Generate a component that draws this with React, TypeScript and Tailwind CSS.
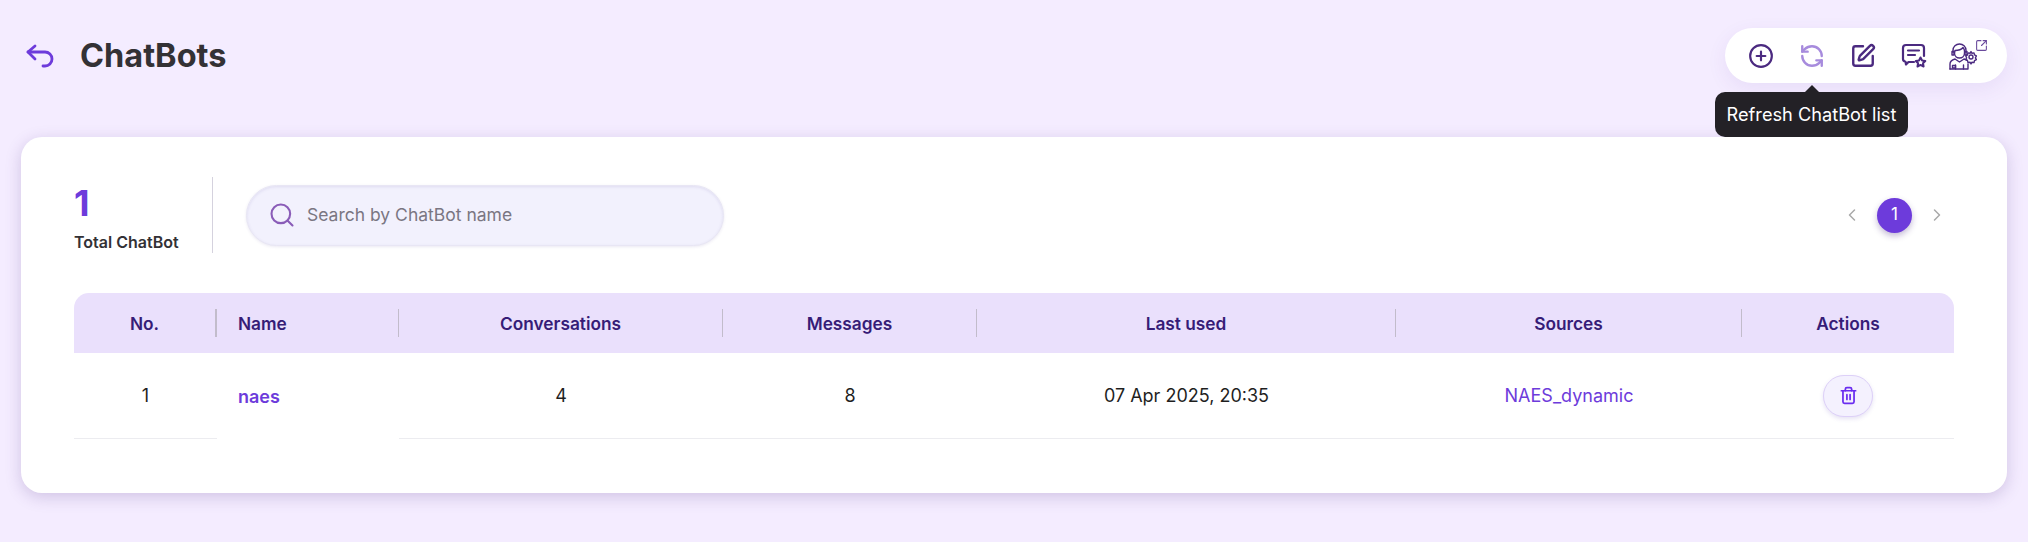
import {
  ChevronLeft,
  ChevronRight,
  CirclePlus,
  RefreshCcw,
  Search,
  SquareArrowOutUpRight,
  SquarePen,
  Trash2,
} from "lucide-react";

const columns = "grid grid-cols-[143px_182px_324px_254px_419px_346px_212px]";

function BackIcon() {
  return (
    <svg width="30" height="24" viewBox="0 0 30 24" fill="none" stroke="currentColor" strokeWidth="2.800" strokeLinecap="round" strokeLinejoin="round">
      <path d="M9 2 2 8l7 7" />
      <path d="M2 8h17a7 7 0 0 1 0 14h-2" />
    </svg>
  );
}

function ReviewIcon() {
  return (
    <svg width="26" height="26" viewBox="0 0 26 26" fill="none" stroke="currentColor" strokeWidth="2.200" strokeLinecap="round" strokeLinejoin="round">
      <path d="M13 19H7.500L5 21.500l-.5-2.700C2.800 18.400 2 17.400 2 16V5a3 3 0 0 1 3-3h15a3 3 0 0 1 3 3v8" />
      <path d="M7 7.500h11M7 12h7" />
      <path d="M19.500 14.500l1.600 3 3.200.5-2.300 2.200.6 3.300-3.100-1.600-3 1.600.6-3.300-2.300-2.200 3.200-.5z" strokeWidth="2" />
    </svg>
  );
}

function AgentIcon() {
  return (
    <svg width="28" height="27" viewBox="0 0 28 27" fill="none" stroke="currentColor" strokeWidth="1.400" strokeLinecap="round" strokeLinejoin="round">
      <path d="M4 9.500V7.500C4 3.500 7 1 10.500 1S17 3.500 17 7.500v2" />
      <path d="M6 7.500c3 0 6-.5 8-3 .8 1 1.500 2 1.500 3.500v2c0 3-2.300 5-5 5s-5-2-5-5z" />
      <path d="M3 8.500h2v3.500H3zM16 8.500h2v3.500h-2z" />
      <path d="M1 26v-5c0-2.500 2-4 5-5l4.500 3 4.500-3 3 1.200" />
      <path d="M1 26h18v-5" />
      <path d="M6.500 26v-4M14.500 26v-4" />
      <path d="M3.500 22.500h3v2.500h-3z" />
      <circle cx="22" cy="14" r="2" />
      <path d="M22 8.500l1 1.800 2-.4.500 2 1.900 1-1 1.900 1 1.800-1.900 1-.5 2-2-.4-1 1.800-1-1.800-2 .4-.5-2-1.700-1 .8-1.800-.8-1.900 1.700-1 .5-2 2 .4z" />
    </svg>
  );
}

const headers = ["No.", "Name", "Conversations", "Messages", "Last used", "Sources", "Actions"];

export default function App() {
  return (
    <div className="min-h-[542px] bg-[#f4ecff] px-[21px] pt-[28px] pb-[49px] font-['Inter',sans-serif]">
      {/* Top bar */}
      <div className="flex items-center justify-between h-[55px] mb-[54px]">
        <div className="flex items-center pl-[5px] text-[#6d3bdb]">
          <BackIcon />
          <h1 className="ml-[24px] mt-[2px] text-[32.500px] font-bold leading-none text-[#333135]">ChatBots</h1>
        </div>

        <div className="relative flex items-center h-[55px] w-[282px] pl-[23px] rounded-full bg-white shadow-[0_6px_20px_rgba(90,50,160,0.08)] text-[#4b2a80]">
          <div className="flex items-center gap-[25px]">
            <CirclePlus size={26} strokeWidth={2} />
            <RefreshCcw size={26} strokeWidth={2.200} className="text-[#a78bdd]" />
            <SquarePen size={26} strokeWidth={2.200} />
            <ReviewIcon />
            <div className="relative -ml-[3px] mt-[2px]">
              <AgentIcon />
              <SquareArrowOutUpRight size={13} strokeWidth={2} className="absolute -top-[4px] -right-[11px] text-[#6a4a9c]" />
            </div>
          </div>

          {/* Tooltip */}
          <div className="absolute top-[64px] left-[-10px] z-10 flex items-center justify-center w-[193px] h-[45px] rounded-[10px] bg-[#232126] text-[18.200px] text-white">
            Refresh ChatBot list
            <span className="absolute -top-[7px] left-[89px] h-0 w-0 border-x-[8px] border-b-[8px] border-x-transparent border-b-[#232126]" />
          </div>
        </div>
      </div>

      {/* Card */}
      <div className="rounded-[21px] bg-white px-[53px] pt-[40px] pb-[54px] shadow-[0_4px_16px_rgba(80,50,130,0.22)]">
        <div className="flex items-center justify-between h-[76px] mb-[40px]">
          <div className="flex items-center">
            <div className="flex flex-col w-[139px] h-[76px] border-r border-[#d5d2de] pt-[4px]">
              <span className="text-[36px] font-bold leading-[44px] text-[#6d3bdb]">1</span>
              <span className="mt-[7px] text-[16px] font-semibold leading-[20px] text-[#333135]">Total ChatBot</span>
            </div>
            <div className="ml-[33px] flex items-center w-[478px] h-[61px] pl-[21px] rounded-full border border-[#e8e6f4] bg-[#f2f1fd] shadow-[inset_0_1px_3px_rgba(90,70,160,0.12),0_1px_3px_rgba(90,70,160,0.12)]">
              <Search size={28} strokeWidth={1.800} className="shrink-0 text-[#8a5cb8]" />
              <input
                placeholder="Search by ChatBot name"
                className="ml-[11px] mt-[1px] flex-1 bg-transparent text-[17.500px] outline-none placeholder:text-[#7a7682]"
              />
            </div>
          </div>

          <div className="flex items-center pr-[7px]">
            <ChevronLeft size={20} strokeWidth={1.800} className="text-[#a9a9a9]" />
            <span className="mx-[15px] flex items-center justify-center w-[35px] h-[35px] rounded-full bg-[#6d3bdb] text-[17px] text-white shadow-[0_3px_6px_rgba(60,30,120,0.3)]">1</span>
            <ChevronRight size={20} strokeWidth={1.800} className="text-[#a9a9a9]" />
          </div>
        </div>

        {/* Table */}
        <div className={`${columns} h-[60px] rounded-t-[15px] bg-[#eae0fc] text-[17.300px] font-semibold text-[#361c77]`}>
          {headers.map((h, i) => (
            <div key={h} className={`flex items-center ${i === 1 ? "h-[59px] pl-[21px] bg-[#eae0fc]" : "h-full justify-center"}`}>
              <div className={`flex-1 pt-[2px] ${i === 1 ? "text-left" : "text-center"}`}>{h}</div>
              {i < 6 && <span className={`${i === 0 ? "w-[2px]" : "w-px"} h-[28px] bg-[#c2bccb]`} />}
            </div>
          ))}
        </div>
        <div className={`${columns} h-[86px] text-[18px] text-[#1f1f1f]`}>
          <div className="flex items-center justify-center border-b border-[#ececf0]">1</div>
          <div className="flex items-center pl-[21px] font-semibold text-[#6d3bdb]">naes</div>
          <div className="flex items-center justify-center border-b border-[#ececf0]">4</div>
          <div className="flex items-center justify-center border-b border-[#ececf0]">8</div>
          <div className="flex items-center justify-center border-b border-[#ececf0]">07 Apr 2025, 20:35</div>
          <div className="flex items-center justify-center border-b border-[#ececf0] text-[#6d3bdb]">NAES_dynamic</div>
          <div className="flex items-center justify-center border-b border-[#ececf0]">
            <button className="flex items-center justify-center w-[50px] h-[42px] rounded-[21px] border border-[#ddd0f8] bg-[#f4f1fe] shadow-[0_2px_4px_rgba(90,60,180,0.15)]">
              <Trash2 size={19} strokeWidth={2.200} className="text-[#6a2df0]" />
            </button>
          </div>
        </div>
      </div>
    </div>
  );
}
